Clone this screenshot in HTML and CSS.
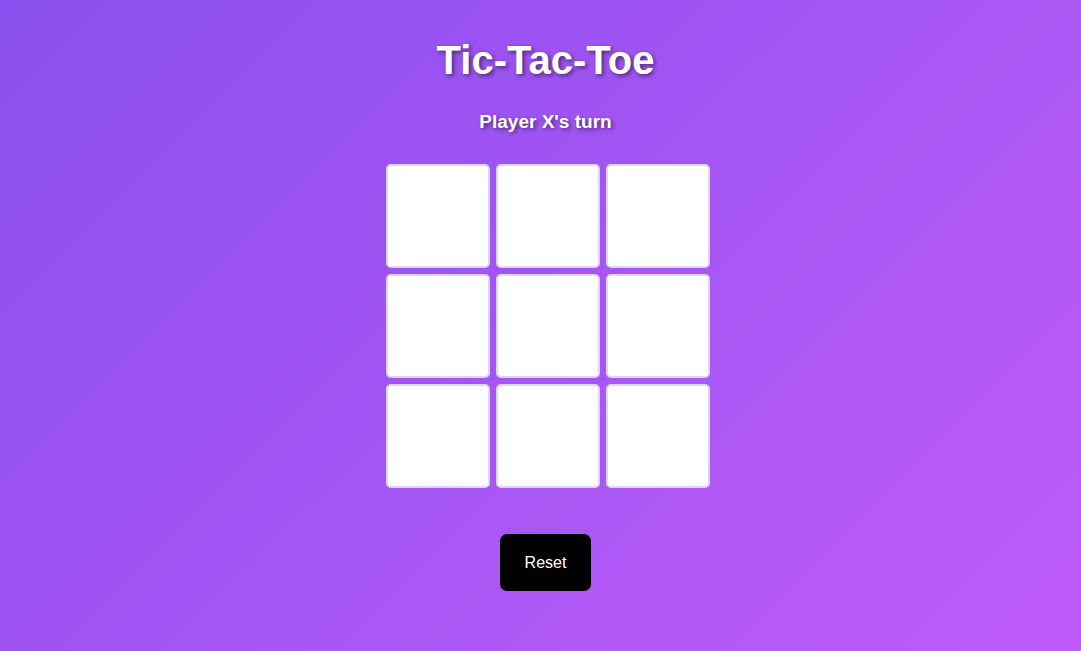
FILE: index.html
```html
<!DOCTYPE html>
<html lang="en">
<head>
<meta charset="utf-8">
<title>Tic-Tac-Toe</title>
<link rel="stylesheet" href="styles.css">
</head>
<body>
<main class="game">
  <h1 class="title">Tic-Tac-Toe</h1>
  <p class="status">Player X's turn</p>
  <div class="board">
    <button class="cell"></button>
    <button class="cell"></button>
    <button class="cell"></button>
    <button class="cell"></button>
    <button class="cell"></button>
    <button class="cell"></button>
    <button class="cell"></button>
    <button class="cell"></button>
    <button class="cell"></button>
  </div>
  <button class="reset">Reset</button>
</main>
</body>
</html>
```

FILE: styles.css
```css
html, body {
  margin: 0;
  height: 100%;
}
body {
  font-family: "Liberation Sans", Arial, sans-serif;
  background: linear-gradient(135deg, #8a4fee 0%, #bf5cf9 100%);
  color: #fff;
  padding-left: 10px;
  box-sizing: border-box;
}
.game {
  display: flex;
  flex-direction: column;
  align-items: center;
  padding-top: 37px;
}
.title {
  margin: 0;
  font-size: 40px;
  line-height: 46px;
  font-weight: bold;
  text-shadow: 2px 2px 4px rgba(0, 0, 0, 0.5);
}
.status {
  margin: 28px 0 0;
  font-size: 19px;
  line-height: 22px;
  font-weight: bold;
  text-shadow: 2px 2px 4px rgba(0, 0, 0, 0.5);
}
.board {
  margin-top: 31px;
  display: grid;
  grid-template-columns: repeat(3, 104px);
  grid-template-rows: repeat(3, 104px);
  gap: 6px;
  margin-left: 5px;
}
.cell {
  background: #fff;
  border: 2px solid #ddd6f0;
  border-radius: 5px;
  padding: 0;
}
.reset {
  margin-top: 46px;
  background: #000;
  color: #fff;
  border: none;
  border-radius: 7px;
  font-family: "Liberation Sans", Arial, sans-serif;
  font-size: 16px;
  width: 91px;
  height: 57px;
}
```
